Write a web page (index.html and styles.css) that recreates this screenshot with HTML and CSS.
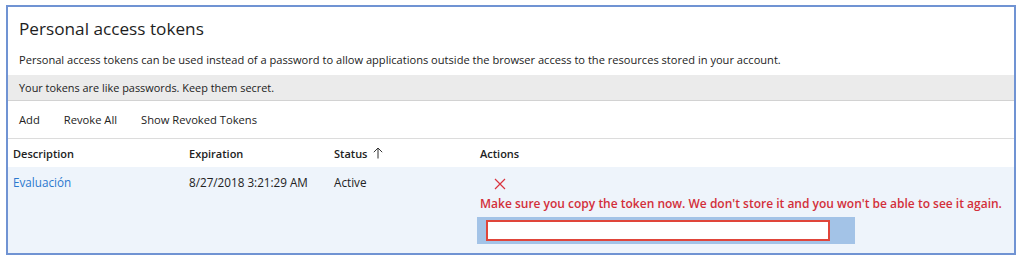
FILE: index.html
```html
<!DOCTYPE html>
<html>
<head>
<meta charset="utf-8">
<link rel="stylesheet" href="styles.css">
</head>
<body>
<div class="frame">
  <h1 class="title">Personal access tokens</h1>
  <p class="desc">Personal access tokens can be used instead of a password to allow applications outside the browser access to the resources stored in your account.</p>
  <div class="notice">Your tokens are like passwords. Keep them secret.</div>
  <div class="toolbar">
    <span class="tool">Add</span>
    <span class="tool">Revoke All</span>
    <span class="tool">Show Revoked Tokens</span>
  </div>
  <div class="thead">
    <div class="c1">Description</div>
    <div class="c2">Expiration</div>
    <div class="c3 status">Status <svg class="arrow" width="10" height="12" viewBox="0 0 10 12"><path d="M5 11.5 V1 M0.8 5.2 L5 1 L9.2 5.2" stroke="#333" stroke-width="1" fill="none"/></svg></div>
    <div class="c4">Actions</div>
  </div>
  <div class="row">
    <div class="c1"><span class="link">Evaluación</span></div>
    <div class="c2">8/27/2018 3:21:29 AM</div>
    <div class="c3">Active</div>
    <div class="c4 actions">
      <svg class="x" width="12" height="12" viewBox="0 0 12 12"><path d="M1 1 L11 11 M11 1 L1 11" stroke="#d9343f" stroke-width="1.2" fill="none"/></svg>
      <div class="warn">Make sure you copy the token now. We don't store it and you won't be able to see it again.</div>
      <div class="tokenwrap"><div class="tokenbox"></div></div>
    </div>
  </div>
</div>
</body>
</html>
```
FILE: styles.css
```css
html, body { margin: 0; padding: 0; background: #fff; }
body { font-family: "Open Sans", "Noto Sans", sans-serif; color: #222; }
.frame {
  margin: 5px 0 0 6px;
  width: 1006px;
  height: 246px;
  border: 2px solid #7093d3;
  display: flex;
  flex-direction: column;
  overflow: hidden;
}
.title {
  margin: 0;
  padding: 9px 0 0 11px;
  font-weight: 400;
  font-size: 17.2px;
  line-height: 26px;
  color: #1e1e1e;
}
.desc {
  margin: 0;
  padding: 10px 0 0 11px;
  font-size: 11.1px;
  line-height: 16px;
  height: 17px;
}
.notice {
  margin-top: 6px;
  background: #ebebeb;
  border-bottom: 1px solid #d2d2d2;
  height: 25px;
  line-height: 25px;
  padding-left: 11px;
  font-size: 10.9px;
}
.toolbar {
  display: flex;
  gap: 24px;
  padding-left: 11px;
  height: 37px;
  align-items: center;
  border-bottom: 1px solid #dcdcdc;
  font-size: 11.2px;
}
.thead, .row {
  display: grid;
  grid-template-columns: 176px 145px 146px 1fr;
  padding-left: 5px;
  font-size: 11.7px;
}
.thead {
  height: 28px;
  align-items: center;
  font-weight: 600;
  font-size: 11px;
}
.status { display: flex; align-items: center; }
.arrow { margin-left: 6px; }
.row {
  flex: 1;
  background: #eef4fb;
  padding-top: 7px;
  line-height: 16px;
}
.link { color: #2b78cf; }
.actions { display: flex; flex-direction: column; }
.x { margin: 4px 0 0 14px; }
.warn {
  color: #d32f3a;
  font-weight: 600;
  font-size: 12px;
  margin-top: 6px;
  white-space: nowrap;
}
.tokenwrap {
  margin-top: 5px;
  margin-left: -3px;
  width: 378px;
  height: 27px;
  background: #a3c3e7;
  display: flex;
  align-items: center;
}
.tokenbox {
  margin-left: 9px;
  width: 340px;
  height: 17px;
  background: #fff;
  border: 2px solid #e0453a;
}
```
